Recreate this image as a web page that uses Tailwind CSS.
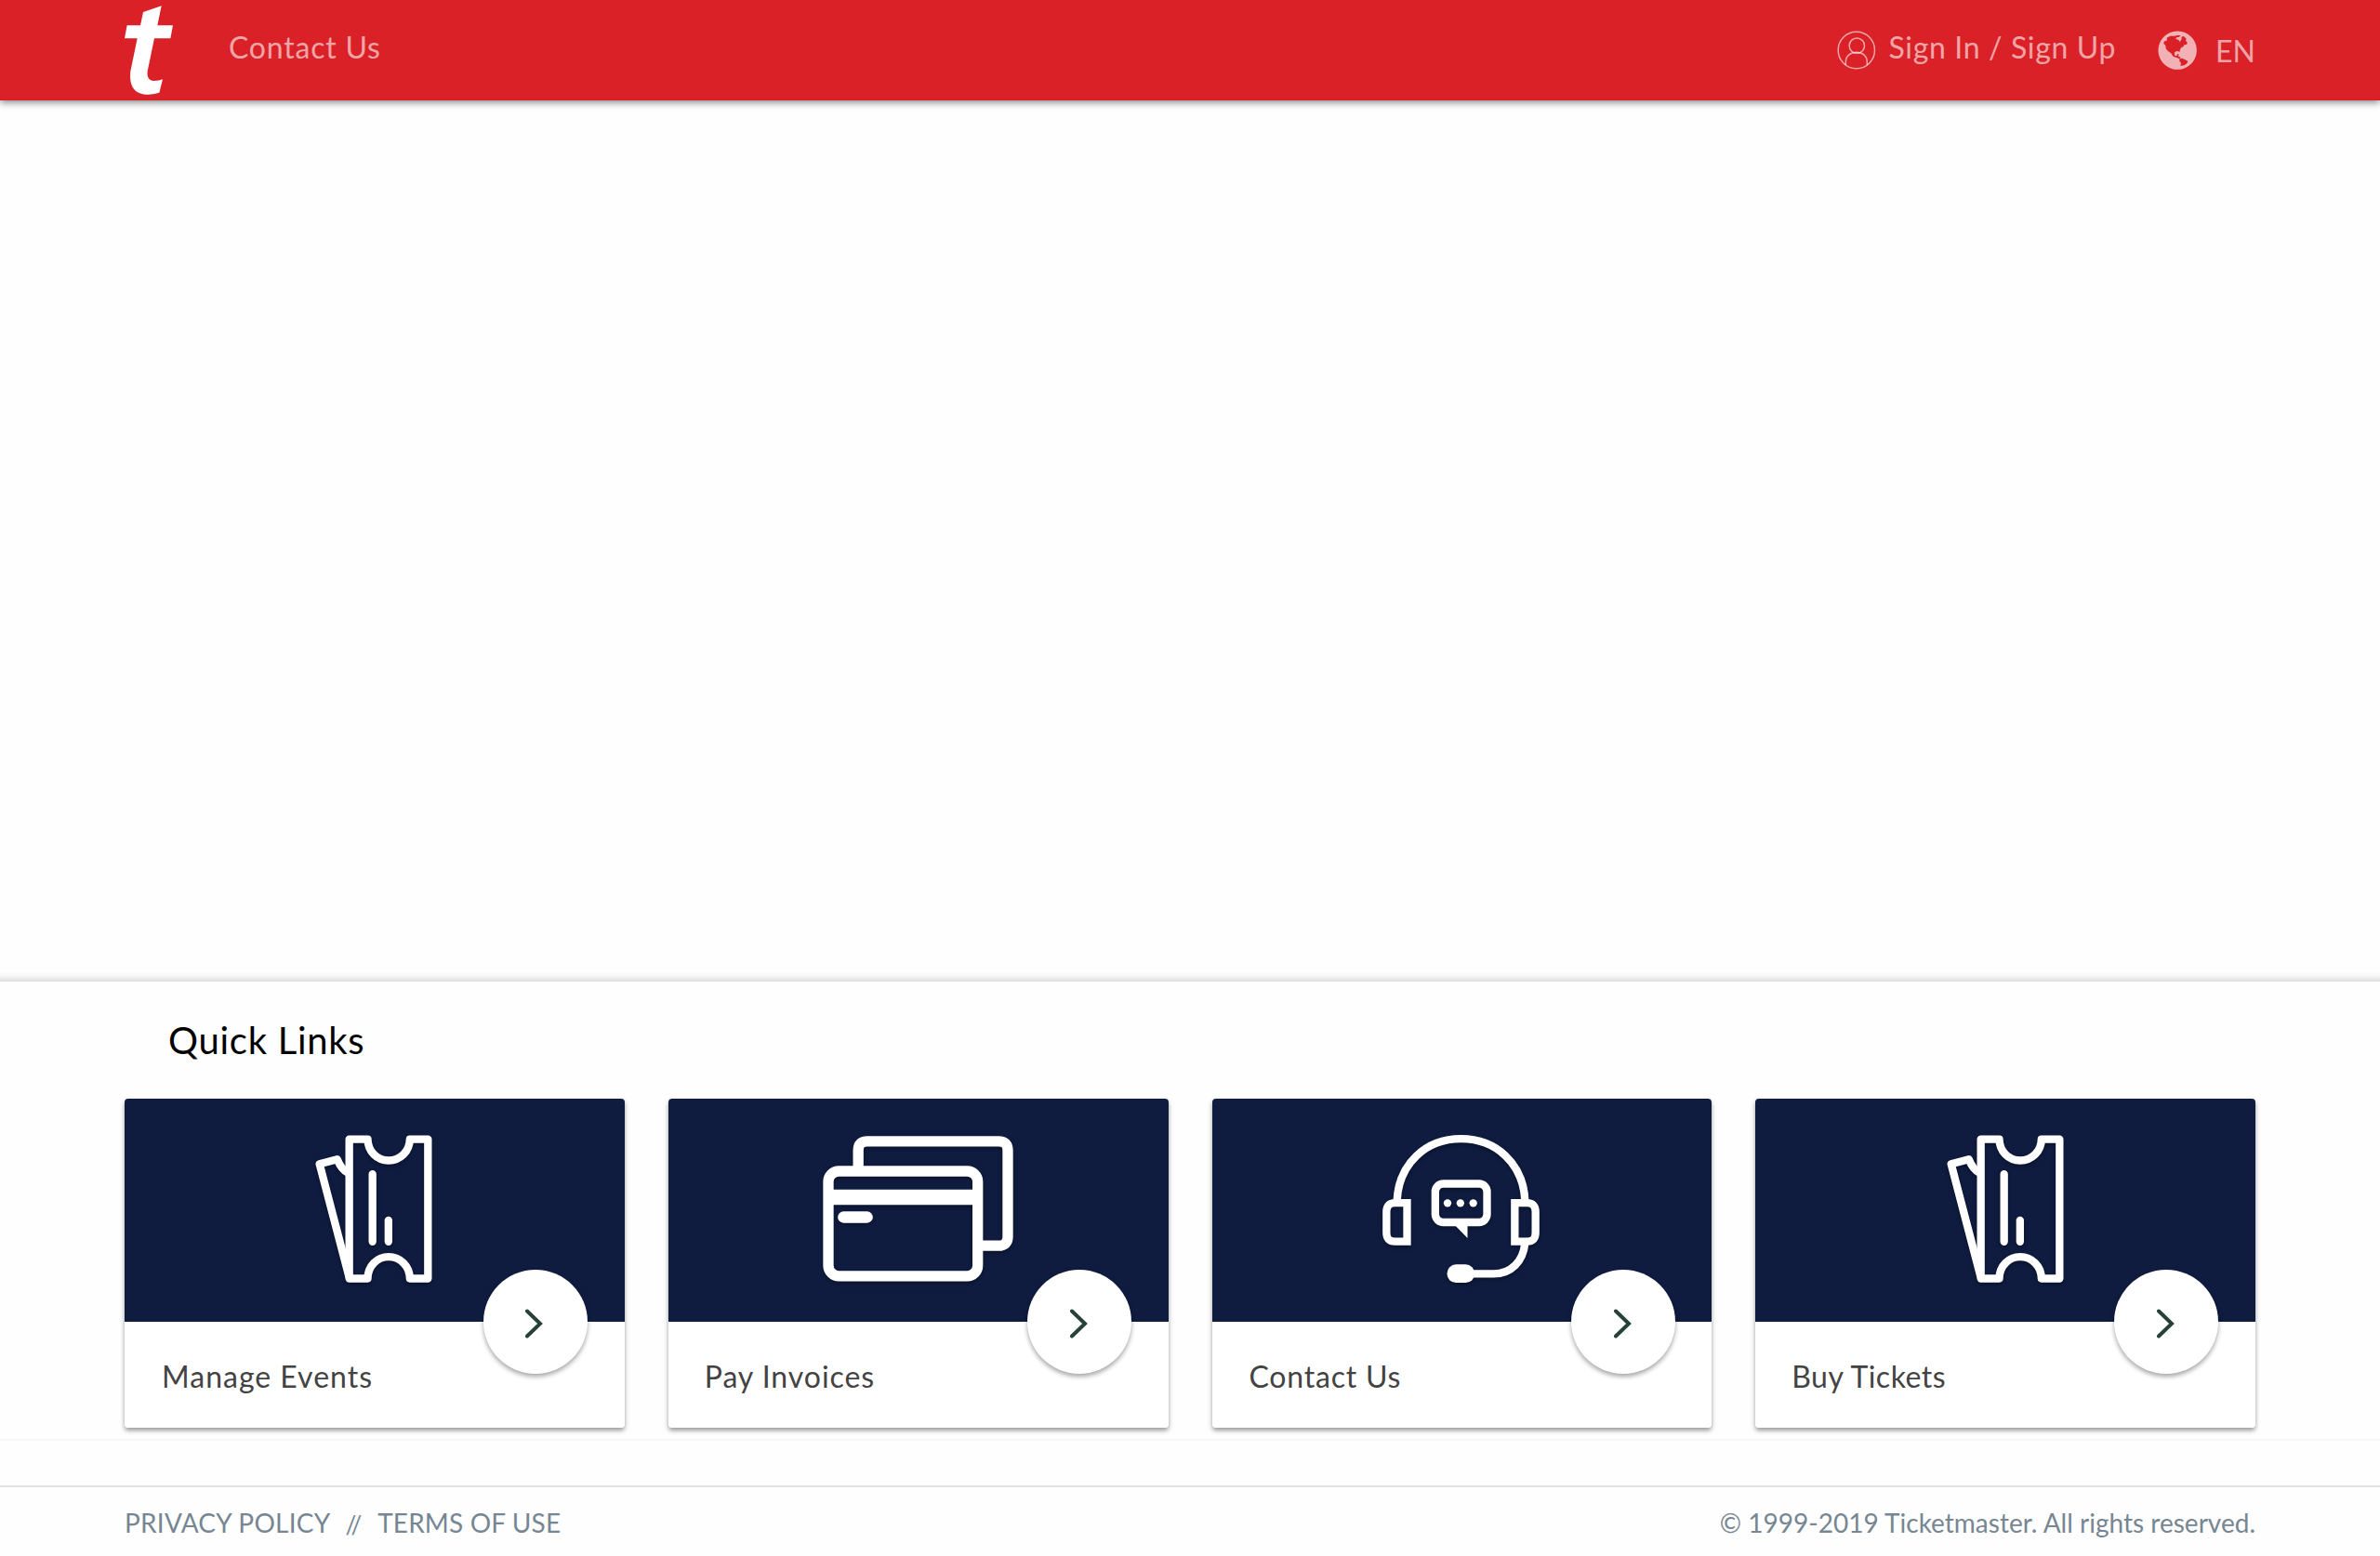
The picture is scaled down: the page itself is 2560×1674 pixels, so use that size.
<!DOCTYPE html>
<html lang="en">
<head>
<meta charset="utf-8">
<title>Ticketmaster</title>
<script src="https://cdn.jsdelivr.net/npm/@tailwindcss/browser@4"></script>
</head>
<body class="flex h-[1674px] w-[2560px] flex-col overflow-hidden bg-[#fefefe] font-['Lato',sans-serif]">

<svg class="hidden">
  <symbol id="ticket" viewBox="88 92 378 476">
    <g fill="none" stroke="#fff" stroke-width="25" stroke-linejoin="round" stroke-linecap="round">
      <path d="M198 105.500H257.500C258 145 288 174 325 174S393 145 393.500 105.500H452V555H393.500C393 514 362 485 325 485S258 514 257.500 555H198Z"/>
      <path d="M194 214C179 207 168 192 159 170L102 185L197 548"/>
      <path d="M273 218V436M324.500 367V436"/>
    </g>
  </symbol>
</svg>

<header class="z-10 flex h-[108px] shrink-0 items-center justify-between bg-[#da2128] px-[134px] text-[32px] leading-10 text-white/60 shadow-[0_2px_8px_rgba(0,0,0,0.5)]">
  <div class="flex items-center">
    <svg class="h-24 w-[52px]" viewBox="72 18 156 288" fill="#fff"><path d="M191 19L132 39L123 82H80L72 124H113L91 230C86 282 106 305 150 305Q170 304 184 299L195 256Q183 261 168 261C150 261 142 247 147 225L168 124H220L228 82H178Z"/></svg>
    <a class="ml-[60px] pb-1.5 tracking-[0.79px]">Contact Us</a>
  </div>
  <div class="flex items-center">
    <svg class="size-[42px]" viewBox="78 99 126 126" fill="none" stroke="currentColor" stroke-width="4.500"><circle cx="140.500" cy="162" r="59"/><circle cx="142" cy="147.500" r="24.500"/><path d="M106 210V200C106 181 120 169 141 169S175 182 175 200V210"/></svg>
    <a class="ml-[13px] pb-1.5 tracking-[0.65px]">Sign In / Sign Up</a>
    <svg class="ml-[45px] size-[42px] text-white/65" viewBox="1114 101 126 126" fill="currentColor" fill-rule="evenodd"><path d="M1177.500 102.500a62 62 0 1 0 .01 0ZM1134 136L1144 132L1143 124L1154 118L1169 118L1176 116L1187 116L1183 121L1174 123L1172 128L1180 130L1186 137L1191 127L1190 121L1198 119L1206 127L1204 133L1209 139L1208 145L1199 147L1196 153L1190 155L1186 162L1184 171L1180 167L1172 168L1167 173L1169 181L1175 183L1177 177L1182 177L1180 184L1187 186L1185 192L1193 190L1201 194L1211 199L1208 207L1199 213L1187 215L1189 205L1184 200L1184 192L1175 188L1164 184L1156 173L1147 167L1140 159L1139 149L1133 143Z"/></svg>
    <span class="ml-5 pt-0.5">EN</span>
  </div>
</header>

<main class="flex-1 shadow-[inset_0_-12px_8px_-10px_rgba(0,0,0,0.2)]"></main>

<section class="h-[494px] shrink-0 border-b-2 border-[#f8f8f8] px-[134px]">
  <h2 class="flex h-[126px] items-center pl-[47px] text-[40px] tracking-[0.73px] text-black">Quick Links</h2>
  <div class="grid grid-cols-4 gap-[47px]">

    <a class="relative block h-[354px] rounded shadow-[0_3px_5px_rgba(0,0,0,0.4)]">
      <div class="flex h-60 items-center justify-center rounded-t bg-[#0f1c40] pb-1 pr-px"><svg class="h-[159px] w-[126px] overflow-visible drop-shadow-[0_2px_2px_rgba(0,0,0,0.35)]"><use href="#ticket"/></svg></div>
      <div class="flex h-[114px] items-center rounded-b bg-white pl-10 pt-[3px] text-[32px] tracking-[1px] text-[#434343]">Manage Events</div>
      <span class="absolute right-10 top-[184px] flex size-28 items-center justify-center rounded-full bg-white shadow-[0_3px_5px_rgba(0,0,0,0.35)]"><svg class="mr-0.5 mt-1 h-8 w-[19px]" viewBox="0 0 19 32" fill="none" stroke="#264238" stroke-width="4" stroke-linecap="round"><path d="M2 2.500L16 16L2 29.500"/></svg></span>
    </a>

    <a class="relative block h-[354px] rounded shadow-[0_3px_5px_rgba(0,0,0,0.4)]">
      <div class="flex h-60 items-center justify-center rounded-t bg-[#0f1c40] pb-1">
        <svg class="h-[157px] w-[205px] overflow-visible drop-shadow-[0_2px_2px_rgba(0,0,0,0.35)]" viewBox="76 96 615 470" fill="none" stroke="#fff" stroke-width="34">
          <rect x="94" y="209.500" width="482" height="338.500" rx="34"/>
          <path d="M190.500 200V143Q190.500 113 220 113H643Q673 113 673 143V420Q673 450 643 450H585"/>
          <path d="M100 293.500H570" stroke-width="49"/>
          <path d="M143 358H219" stroke-width="37" stroke-linecap="round"/>
        </svg>
      </div>
      <div class="flex h-[114px] items-center rounded-b bg-white pl-[39px] pt-[3px] text-[32px] tracking-[0.95px] text-[#434343]">Pay Invoices</div>
      <span class="absolute right-10 top-[184px] flex size-28 items-center justify-center rounded-full bg-white shadow-[0_3px_5px_rgba(0,0,0,0.35)]"><svg class="mr-px mt-1 h-8 w-[19px]" viewBox="0 0 19 32" fill="none" stroke="#264238" stroke-width="4" stroke-linecap="round"><path d="M2 2.500L16 16L2 29.500"/></svg></span>
    </a>

    <a class="relative block h-[354px] rounded shadow-[0_3px_5px_rgba(0,0,0,0.4)]">
      <div class="flex h-60 items-center justify-center rounded-t bg-[#0f1c40] pb-1 pr-0.5">
        <svg class="h-[159px] w-[169px] overflow-visible drop-shadow-[0_2px_2px_rgba(0,0,0,0.35)]" viewBox="82 93 506 477" fill="none" stroke="#fff" stroke-width="25">
          <path d="M128.500 305C134 185 222 105.500 335 105.500S536 185 541.500 305"/>
          <path d="M161 312.500V437H122Q94.500 437 94.500 409V341Q94.500 312.500 122 312.500Z"/>
          <path d="M508.500 312.500V437H548Q575.500 437 575.500 409V341Q575.500 312.500 548 312.500Z"/>
          <path d="M541 445C535 500 498 541 440 541H370"/>
          <rect x="290" y="511" width="89" height="59" rx="29" fill="#fff" stroke="none"/>
          <rect x="252" y="250.500" width="167" height="124.500" rx="26"/>
          <path d="M317 386H356V426Z" fill="#fff" stroke="none"/>
          <g fill="#fff" stroke="none"><circle cx="291.500" cy="313" r="12.500"/><circle cx="333" cy="313" r="12.500"/><circle cx="374.500" cy="313" r="12.500"/></g>
        </svg>
      </div>
      <div class="flex h-[114px] items-center rounded-b bg-white pl-10 pt-[3px] text-[32px] tracking-[0.79px] text-[#434343]">Contact Us</div>
      <span class="absolute right-[39px] top-[184px] flex size-28 items-center justify-center rounded-full bg-white shadow-[0_3px_5px_rgba(0,0,0,0.35)]"><svg class="mr-0.5 mt-1 h-8 w-[19px]" viewBox="0 0 19 32" fill="none" stroke="#264238" stroke-width="4" stroke-linecap="round"><path d="M2 2.500L16 16L2 29.500"/></svg></span>
    </a>

    <a class="relative block h-[354px] rounded shadow-[0_3px_5px_rgba(0,0,0,0.4)]">
      <div class="flex h-60 items-center justify-center rounded-t bg-[#0f1c40] pb-1"><svg class="h-[159px] w-[126px] overflow-visible drop-shadow-[0_2px_2px_rgba(0,0,0,0.35)]"><use href="#ticket"/></svg></div>
      <div class="flex h-[114px] items-center rounded-b bg-white pl-[39px] pt-[3px] text-[32px] tracking-[0.5px] text-[#434343]">Buy Tickets</div>
      <span class="absolute right-10 top-[184px] flex size-28 items-center justify-center rounded-full bg-white shadow-[0_3px_5px_rgba(0,0,0,0.35)]"><svg class="mr-px mt-1 h-8 w-[19px]" viewBox="0 0 19 32" fill="none" stroke="#264238" stroke-width="4" stroke-linecap="round"><path d="M2 2.500L16 16L2 29.500"/></svg></span>
    </a>
  </div>
</section>

<footer class="mt-12 flex h-[76px] shrink-0 items-center justify-between border-t-2 border-[#e3e3e3] px-[134px] pt-0.5 text-[28px] text-[#768692]">
  <div class="flex items-center"><a class="tracking-[0.25px]">PRIVACY POLICY</a><span class="ml-4 pt-1 text-[26px]">//</span><a class="ml-[17px] tracking-[0.15px]">TERMS OF USE</a></div>
  <p class="tracking-[0.01px]">© 1999-2019 Ticketmaster. All rights reserved.</p>
</footer>
</body>
</html>
